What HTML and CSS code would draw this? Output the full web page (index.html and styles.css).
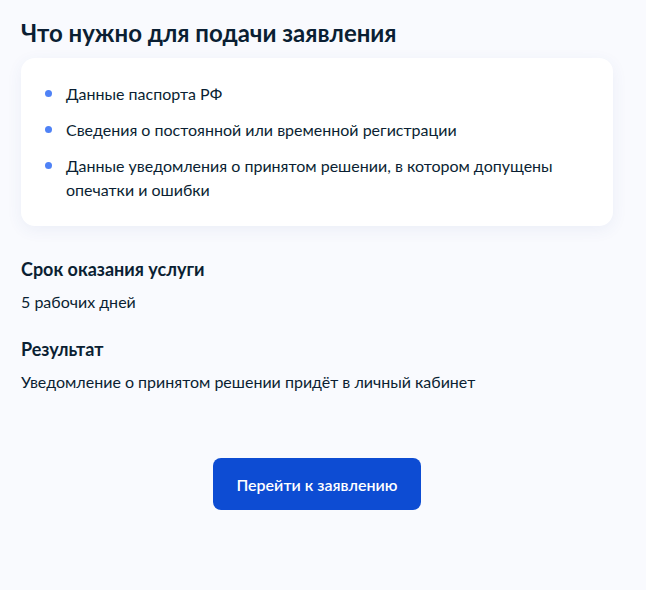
FILE: index.html
```html
<!DOCTYPE html>
<html>
<head>
	<meta charset="utf-8">
	<title>Исправление ошибок</title>
	<link rel="stylesheet" href="styles.css">
</head>
<body>
	<div class="page">
		<h1 class="title">Что нужно для подачи заявления</h1>

		<div class="card">
			<ul class="docs">
				<li>Данные паспорта РФ</li>
				<li>Сведения о постоянной или временной регистрации</li>
				<li>Данные уведомления о принятом решении, в котором допущены опечатки и ошибки</li>
			</ul>
		</div>

		<div class="info">
			<h3>Срок оказания услуги</h3>
			<p>5 рабочих дней</p>
		</div>

		<div class="info">
			<h3>Результат</h3>
			<p>Уведомление о принятом решении придёт в личный кабинет</p>
		</div>

		<div class="actions">
			<button class="btn">Перейти к заявлению</button>
		</div>
	</div>
</body>
</html>
```

FILE: styles.css
```css
*{
	margin: 0;
	padding: 0;
	box-sizing: border-box;
}
body{
	background: #f9fafe;
	color: #0b1f33;
	font-family: Lato, "Noto Sans", sans-serif;
}
ul{
	list-style: none;
}
.page{
	padding: 17px 33px 0 21px;
}
.title{
	font-size: 24px;
	line-height: 32px;
	font-weight: 700;
	margin-bottom: 9px;
}
.card{
	background: #fff;
	border-radius: 14px;
	padding: 24px;
	box-shadow: 0 4px 16px rgba(60, 90, 150, 0.07);
}
.docs li{
	position: relative;
	padding-left: 21px;
	font-size: 16px;
	line-height: 24px;
}
.docs li + li{
	margin-top: 12px;
}
/*синяя точка*/
.docs li:before{
	content: '';
	position: absolute;
	left: 0;
	top: 8px;
	width: 7px;
	height: 7px;
	border-radius: 50%;
	background: #4f82f6;
}
.info{
	margin-top: 31px;
}
.info + .info{
	margin-top: 23px;
}
.info h3{
	font-size: 18px;
	line-height: 24px;
	font-weight: 700;
}
.info p{
	margin-top: 9px;
	font-size: 16px;
	line-height: 24px;
}
.actions{
	margin-top: 64px;
	display: flex;
	justify-content: center;
}
.btn{
	width: 208px;
	height: 52px;
	border: none;
	border-radius: 8px;
	background: #0d4cd3;
	color: #fff;
	font-family: Lato, "Noto Sans", sans-serif;
	font-size: 16px;
	font-weight: 600;
	cursor: pointer;
}
```
